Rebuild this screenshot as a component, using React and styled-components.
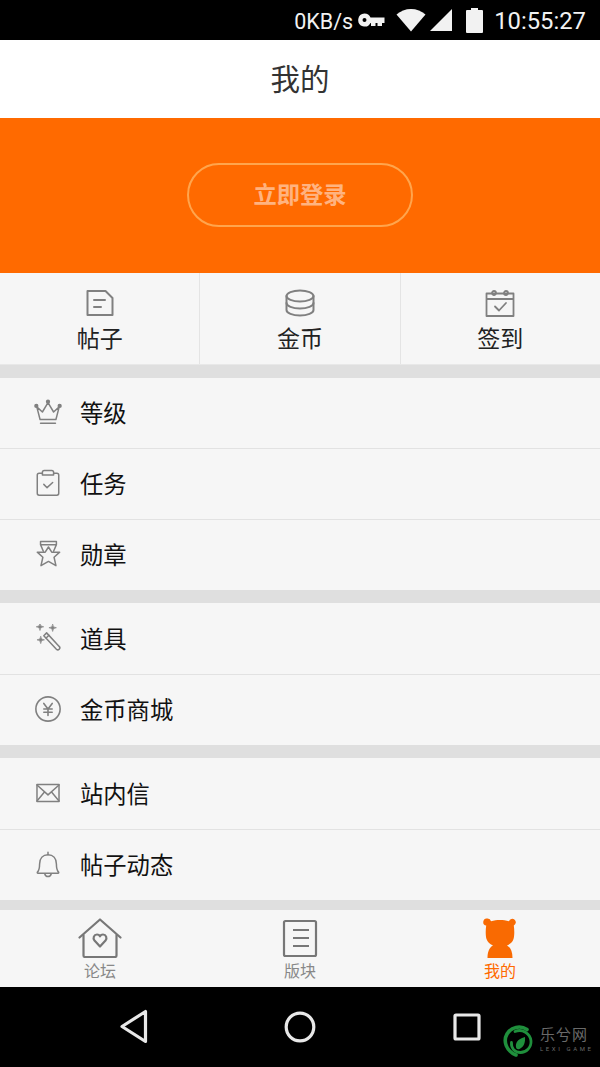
import React from 'react';
import styled, { createGlobalStyle } from 'styled-components';

const GlobalStyle = createGlobalStyle`
  html, body {
    margin: 0;
    padding: 0;
    background: #f6f6f6;
  }
  * {
    box-sizing: border-box;
  }
`;

const CJK = `"Noto Sans CJK SC", "Roboto", sans-serif`;

const Page = styled.div`
  width: 600px;
  height: 1067px;
  display: flex;
  flex-direction: column;
  overflow: hidden;
  font-family: ${CJK};
  background: #f6f6f6;
`;

const StatusBar = styled.div`
  height: 40px;
  background: #000;
  color: #f2f2f2;
  display: flex;
  align-items: center;
  justify-content: flex-end;
  padding-right: 14px;
  font-family: Roboto, sans-serif;
`;

const Speed = styled.span`
  font-size: 21.5px;
  margin: 2px 5px 0 0;
`;

const Clock = styled.span`
  font-size: 23.8px;
  margin: 2px 0 0 11px;
`;

const StatusIcon = styled.svg`
  display: block;
  margin-left: ${(p) => p.$gap || 0}px;
`;

const TitleBar = styled.div`
  height: 78px;
  background: #fff;
  display: flex;
  align-items: center;
  justify-content: center;
  padding-bottom: 4px;
  font-size: 29.5px;
  color: #333;
`;

const Banner = styled.div`
  height: 155px;
  background: #ff6a00;
  display: flex;
  align-items: center;
  justify-content: center;
`;

const LoginButton = styled.div`
  width: 226px;
  height: 64px;
  margin-bottom: 1px;
  border: 2px solid #ffa54d;
  border-radius: 32px;
  display: flex;
  align-items: center;
  justify-content: center;
  padding-bottom: 4px;
  font-size: 23.25px;
  font-weight: 700;
  color: #ffb380;
`;

const QuickBar = styled.div`
  height: 92px;
  display: flex;
  background: #f6f6f6;
  border-bottom: 1px solid #e8e8e8;
`;

const QuickItem = styled.div`
  flex: 1;
  display: flex;
  flex-direction: column;
  align-items: center;
  padding-top: 16px;
  font-size: 23px;
  line-height: 30px;
  color: #222;
  border-left: ${(p) => (p.$first ? 'none' : '1px solid #e4e4e4')};

  svg {
    display: block;
    margin-bottom: 5px;
  }
`;

const Gap = styled.div`
  height: ${(p) => p.$h}px;
  background: #dfdfdf;
`;

const Row = styled.div`
  height: ${(p) => p.$h}px;
  display: flex;
  align-items: center;
  padding: 0 0 2px 34px;
  font-size: 23.3px;
  color: #111;
  border-bottom: ${(p) => (p.$last ? 'none' : '1px solid #e2e2e2')};
  background: #f6f6f6;

  svg {
    display: block;
    width: 28px;
    height: 28px;
    margin-right: 18px;
    flex: none;
  }
`;

const TabBar = styled.div`
  height: 77px;
  display: flex;
  background: #f6f6f6;
`;

const Tab = styled.div`
  flex: 1;
  display: flex;
  flex-direction: column;
  align-items: center;
  padding-top: 8px;
  font-size: 16px;
  line-height: 24px;
  color: ${(p) => (p.$active ? '#ff6a00' : '#888')};

  svg {
    display: block;
  }
`;

const NavBar = styled.div`
  height: 80px;
  background: #000;
  position: relative;
  display: flex;
  align-items: center;
  justify-content: space-between;
  padding: 0 119px 0 120px;
`;

const Watermark = styled.div`
  position: absolute;
  left: 503px;
  top: 38px;
  display: flex;
  align-items: flex-start;
`;

const WatermarkText = styled.div`
  margin-left: 5px;
  color: #6a6a6a;
`;

const WatermarkName = styled.div`
  font-size: 15px;
  line-height: 17px;
  letter-spacing: 1px;
`;

const WatermarkSub = styled.div`
  font-family: Roboto, sans-serif;
  font-size: 6px;
  line-height: 8px;
  margin-top: 3px;
  letter-spacing: 2.6px;
  white-space: nowrap;
`;

const grey = { fill: 'none', stroke: '#808080', strokeWidth: 1.6, strokeLinecap: 'round', strokeLinejoin: 'round' };

const KeyIcon = () => (
  <StatusIcon width="27" height="14" viewBox="0 0 27 14" fill="#f2f2f2">
    <path fillRule="evenodd" d="M6.500 .5a6.500 6.500 0 0 1 6 4H26.500v5.500h-2.500V13h-4.500V10h-2v3H13v-3h-.5A6.500 6.500 0 1 1 6.500 .5zm0 4.500a2 2 0 1 0 0 4 2 2 0 0 0 0-4z" />
  </StatusIcon>
);

const WifiIcon = () => (
  <StatusIcon $gap={11} width="30" height="24" viewBox="0 0 30 24" fill="#f2f2f2">
    <path d="M15 23.500 0.500 6.500C4.500 3 9.500 1 15 1s10.500 2 14.500 5.500z" />
  </StatusIcon>
);

const SignalIcon = () => (
  <StatusIcon $gap={3} width="24" height="24" viewBox="0 0 24 24" fill="#f2f2f2">
    <path d="M23 1v22H1z" />
  </StatusIcon>
);

const BatteryIcon = () => (
  <StatusIcon $gap={13} width="17" height="25" viewBox="0 0 17 25" fill="#f2f2f2">
    <path d="M5 0h7v2h4a1 1 0 0 1 1 1v21a1 1 0 0 1-1 1H1a1 1 0 0 1-1-1V3a1 1 0 0 1 1-1h4z" />
  </StatusIcon>
);

const PostIcon = () => (
  <svg width="28" height="28" viewBox="0 0 28 28" {...grey} strokeWidth="2">
    <path d="M1.500 2h18l7 7v17h-25z" />
    <path d="M8 11h11M8 18h7" />
  </svg>
);

const CoinsIcon = () => (
  <svg width="30" height="28" viewBox="0 0 30 28" {...grey} strokeWidth="2">
    <ellipse cx="15" cy="7" rx="13.500" ry="5.500" />
    <path d="M1.500 7v14c0 3 6 5.500 13.500 5.500S28.500 24 28.500 21V7" />
    <path d="M1.500 14c0 3 6 5.500 13.500 5.500S28.500 17 28.500 14" />
  </svg>
);

const CalendarIcon = () => (
  <svg width="30" height="28" viewBox="0 0 30 28" {...grey} strokeWidth="1.800">
    <path d="M1.500 4.500h27v22.500h-27zM1.500 10h27" />
    <circle cx="9" cy="4" r="2" />
    <circle cx="21" cy="4" r="2" />
    <path d="M10 17.500l4 4 7-7.500" />
  </svg>
);

const CrownIcon = () => (
  <svg viewBox="0 0 30 30" {...grey}>
    <path d="M3 9.500l6 5.500 6-10 6 10 6-5.500-3.500 13.500h-17z" />
    <path d="M7 27h16" />
    <circle cx="15" cy="4" r="1.500" fill="#808080" />
    <circle cx="2.500" cy="8.500" r="1.500" fill="#808080" />
    <circle cx="27.500" cy="8.500" r="1.500" fill="#808080" />
  </svg>
);

const TaskIcon = () => (
  <svg viewBox="0 0 30 30" {...grey}>
    <path d="M9 4.500H5.500a2 2 0 0 0-2 2V26a2 2 0 0 0 2 2h19a2 2 0 0 0 2-2V6.500a2 2 0 0 0-2-2H21" />
    <path d="M9 6.500V3.500a2 2 0 0 1 2-2h8a2 2 0 0 1 2 2v3z" />
    <path d="M10.500 16.500l3.500 3.500 6-5.500" />
  </svg>
);

const MedalIcon = () => (
  <svg viewBox="0 0 30 30" {...grey}>
    <path d="M7 1.500h17V5H7zM7 5l3 7M24 5l-3 7" />
    <path d="M15.500 7.500L19 13h8.500l-6 5.500 2 9-8-4.500-8 4.500 2-9-6-5.500H12z" />
  </svg>
);

const WandIcon = () => (
  <svg viewBox="0 0 30 30" {...grey}>
    <path d="M10.500 12.500l3-3L27 24a2 2 0 0 1-3 3z" />
    <path d="M13 15l3-3" />
    <g fill="#808080" strokeWidth="0.700">
      <path d="M6.400-.5Q6.400 3 10.400 3 6.400 3 6.400 7 6.400 3 2.400 3 6.400 3 6.400-.5z" />
      <path d="M20 .5Q20 4 24 4 20 4 20 8 20 4 16 4 20 4 20 .5z" />
      <path d="M7.200 13.500Q7.200 17 11.200 17 7.200 17 7.200 21 7.200 17 3.200 17 7.200 17 7.200 13.500z" />
    </g>
  </svg>
);

const YenIcon = () => (
  <svg viewBox="0 0 30 30" {...grey} strokeWidth="1.700">
    <circle cx="15" cy="15" r="13" />
    <path d="M10.500 9l4.500 6 4.500-6M15 15v7M10.500 15h9M10.500 18.500h9" />
  </svg>
);

const MailIcon = () => (
  <svg viewBox="0 0 30 30" {...grey}>
    <path d="M3.200 6h23.600v18H3.200z" />
    <path d="M3.200 6.500L15 17 26.800 6.500M3.200 23.500l8-9.500M26.800 23.500l-8-9.500" />
  </svg>
);

const BellIcon = () => (
  <svg viewBox="0 0 30 30" {...grey}>
    <path d="M3.500 24c2-2 2.500-4 2.500-9 0-6 3.500-10 9-10s9 4 9 10c0 5 .5 7 2.500 9a1 1 0 0 1-1 1h-21a1 1 0 0 1-1-1z" />
    <path d="M15 5V2.500M11.500 25.500c.5 2 2 3 3.500 3s3-1 3.500-3" />
  </svg>
);

const HouseIcon = () => (
  <svg width="44" height="40" viewBox="0 0 44 40" fill="none" stroke="#777" strokeWidth="2.200" strokeLinecap="round" strokeLinejoin="round">
    <path d="M1.500 19.500L22 1.500l20.500 18" />
    <path d="M5.500 17v20.500A1.500 1.500 0 0 0 7 39h30a1.500 1.500 0 0 0 1.500-1.500V17" />
    <path d="M22 28.500l-5.500-6c-2-2.500-.5-6 2.500-6 1.300 0 2.400.7 3 1.800.6-1.100 1.700-1.800 3-1.800 3 0 4.500 3.500 2.500 6z" />
  </svg>
);

const BoardIcon = () => (
  <svg width="44" height="40" viewBox="0 0 44 40" fill="none" stroke="#777" strokeWidth="2.200" strokeLinejoin="round">
    <rect x="6" y="3" width="32" height="35" rx="1.500" />
    <path d="M15 12h16M15 20h16M15 28h16" />
  </svg>
);

const MascotIcon = () => (
  <svg width="44" height="40" viewBox="0 0 44 40" fill="#f96a02">
    <path d="M9.500.5A3.500 3.500 0 0 1 13 3.200C16 2.300 19 2 22 2s6 .3 9 1.200a3.500 3.500 0 1 1 4.800 4.300C36.500 12 36.500 18 35.500 21c-1 3-3 5-6.500 6.500 3.800 2 5.500 6.500 5.500 12.500h-25c0-6 1.700-10.500 5.500-12.500-3.500-1.500-5.500-3.500-6.500-6.500-1-3-1-9-.3-13.500A3.500 3.500 0 0 1 9.500.5z" />
  </svg>
);

const BackIcon = () => (
  <svg width="28" height="36" viewBox="0 0 28 36" fill="none" stroke="#e8e8e8" strokeWidth="3.200" strokeLinejoin="round">
    <path d="M25.500 2.500v30L2 17.500z" />
  </svg>
);

const HomeGlyph = styled.svg`
  display: block;
  margin-right: 1px;
`;

const HomeIcon = () => (
  <HomeGlyph width="32" height="32" viewBox="0 0 32 32" fill="none" stroke="#e8e8e8" strokeWidth="3.200">
    <circle cx="16" cy="16" r="13.800" />
  </HomeGlyph>
);

const RecentIcon = () => (
  <svg width="28" height="28" viewBox="0 0 28 28" fill="none" stroke="#e8e8e8" strokeWidth="3.200" strokeLinejoin="round">
    <rect x="2" y="2" width="24" height="24" rx="1" />
  </svg>
);

const LeafLogo = () => (
  <svg width="32" height="32" viewBox="0 0 32 32" fill="none" stroke="#1f8f3c" strokeLinecap="round">
    <path d="M24 4.500A14 14 0 0 0 4 9c-4 7-1 17 9 21" strokeWidth="3.600" />
    <path d="M12 6.500A11.500 11.500 0 0 1 28 16c.5 6.500-5 11.500-10.500 11.500C11.500 27.500 8 23 8.500 17.500" strokeWidth="2.800" />
    <path fill="#1f8f3c" stroke="none" d="M22 12c.5 5-1 10-5.500 12-1.200.5-2.300.2-3-.5-1.500-3.500 0-7 2.800-9 1.800-1.300 3.700-2 5.700-2.500z" />
  </svg>
);

const quickItems = [
  { label: '帖子', Icon: PostIcon },
  { label: '金币', Icon: CoinsIcon },
  { label: '签到', Icon: CalendarIcon },
];

const groups = [
  {
    gap: 13,
    rows: [
      { label: '等级', Icon: CrownIcon, h: 71 },
      { label: '任务', Icon: TaskIcon, h: 71 },
      { label: '勋章', Icon: MedalIcon, h: 70 },
    ],
  },
  {
    gap: 13,
    rows: [
      { label: '道具', Icon: WandIcon, h: 72 },
      { label: '金币商城', Icon: YenIcon, h: 70 },
    ],
  },
  {
    gap: 13,
    rows: [
      { label: '站内信', Icon: MailIcon, h: 72 },
      { label: '帖子动态', Icon: BellIcon, h: 70 },
    ],
  },
];

const tabs = [
  { label: '论坛', Icon: HouseIcon },
  { label: '版块', Icon: BoardIcon },
  { label: '我的', Icon: MascotIcon, active: true },
];

export default function App() {
  return (
    <Page>
      <GlobalStyle />
      <StatusBar>
        <Speed>0KB/s</Speed>
        <KeyIcon />
        <WifiIcon />
        <SignalIcon />
        <BatteryIcon />
        <Clock>10:55:27</Clock>
      </StatusBar>
      <TitleBar>我的</TitleBar>
      <Banner>
        <LoginButton>立即登录</LoginButton>
      </Banner>
      <QuickBar>
        {quickItems.map(({ label, Icon }, i) => (
          <QuickItem key={label} $first={i === 0}>
            <Icon />
            {label}
          </QuickItem>
        ))}
      </QuickBar>
      {groups.map((group) => (
        <React.Fragment key={group.rows[0].label}>
          <Gap $h={group.gap} />
          {group.rows.map(({ label, Icon, h }, i) => (
            <Row key={label} $last={i === group.rows.length - 1} $h={h}>
              <Icon />
              {label}
            </Row>
          ))}
        </React.Fragment>
      ))}
      <Gap $h={10} />
      <TabBar>
        {tabs.map(({ label, Icon, active }) => (
          <Tab key={label} $active={active}>
            <Icon />
            {label}
          </Tab>
        ))}
      </TabBar>
      <NavBar>
        <BackIcon />
        <HomeIcon />
        <RecentIcon />
        <Watermark>
          <LeafLogo />
          <WatermarkText>
            <WatermarkName>乐兮网</WatermarkName>
            <WatermarkSub>LEXI GAME</WatermarkSub>
          </WatermarkText>
        </Watermark>
      </NavBar>
    </Page>
  );
}
